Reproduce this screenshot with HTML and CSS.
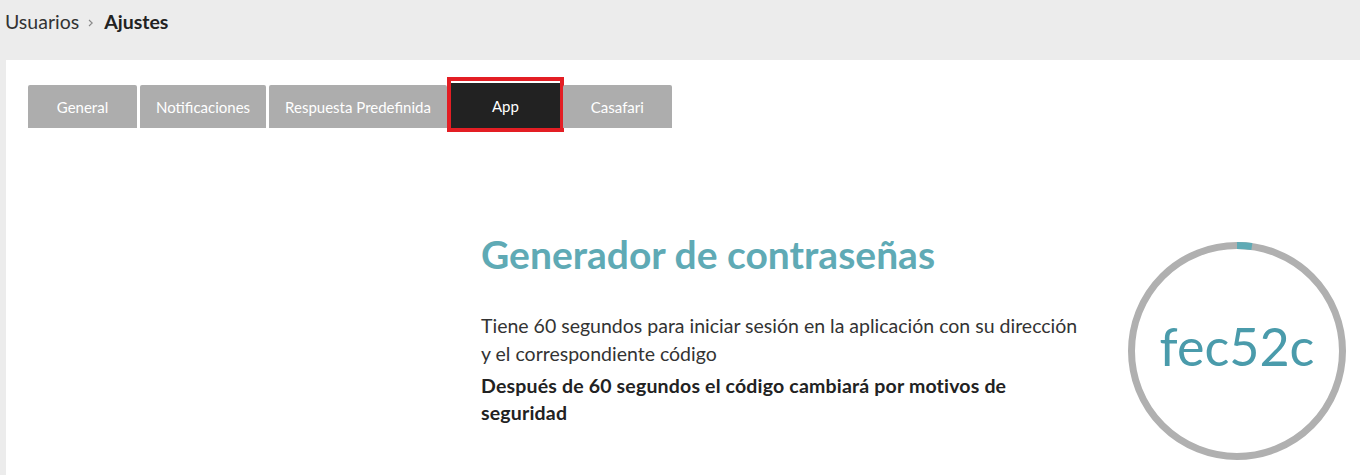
FILE: index.html
```html
<!DOCTYPE html>
<html lang="es">
<head>
    <meta charset="UTF-8">
    <meta name="viewport" content="width=device-width, initial-scale=1.0">
    <title>Ajustes</title>
    <link rel="stylesheet" href="styles.css">
</head>
<body>

    <div class="topbar">
        <span class="crumb">Usuarios</span>
        <svg class="crumb-sep" width="6" height="8" viewBox="0 0 6 8"><path d="M1 1l3.2 3L1 7" fill="none" stroke="#888" stroke-width="1.1"/></svg>
        <span class="crumb current">Ajustes</span>
    </div>

    <div class="panel">
        <div class="tabs">
            <a class="tab">General</a>
            <a class="tab">Notificaciones</a>
            <a class="tab">Respuesta Predefinida</a>
            <a class="tab active">App</a>
            <a class="tab">Casafari</a>
        </div>

        <div class="app-section">
            <div></div>
            <div class="info">
                <h1>Generador de contraseñas</h1>
                <p>Tiene 60 segundos para iniciar sesión en la aplicación con su dirección y el correspondiente código</p>
                <p class="warning">Después de 60 segundos el código cambiará por motivos de seguridad</p>
            </div>
            <div class="timer">
                <svg class="ring" width="218" height="218" viewBox="0 0 218 218">
                    <circle cx="109" cy="109" r="105.5" fill="none" stroke="#b0b0b0" stroke-width="7"/>
                    <circle id="progress" cx="109" cy="109" r="105.5" fill="none" stroke="#5faab5" stroke-width="7"
                        stroke-dasharray="15 700" transform="rotate(-90 109 109)"/>
                </svg>
                <span class="code">fec52c</span>
            </div>
        </div>
    </div>

</body>
</html>
```

FILE: styles.css
```css
body { margin: 0; font-family: Lato, "Open Sans", sans-serif; background: #ececec; color: #333; }
.topbar { height: 60px; padding-left: 5px; display: flex; align-items: center; padding-bottom: 17px; box-sizing: border-box; }
.crumb { font-size: 19.5px; color: #333; }
.crumb.current { font-weight: bold; color: #222; }
.crumb-sep { margin: 3px 10px 0 9px; }
.panel { background: #fff; margin-left: 6px; padding: 25px 22px 0; height: 415px; box-sizing: border-box; }
.tabs { display: flex; gap: 3px; }
.tab { min-width: 109px; height: 43px; box-sizing: border-box; padding: 0 16px; display: flex; align-items: center; justify-content: center; background: #adadad; color: #fff; font-size: 15px; border-radius: 2px 2px 0 0; cursor: pointer; }
.tab.active { background: #222; outline: 4px solid #e31e24; margin: -4px 0 0 1px; height: 47px; border-top: 2px solid #fff; border-radius: 0; }
.app-section { display: grid; grid-template-columns: 453px 647px 218px; margin-top: 103px; }
.info h1 { margin: 0 0 34px; font-size: 39px; font-weight: bold; color: #5faab5; line-height: 1.2; }
.info p { margin: 0; font-size: 19.5px; line-height: 28px; width: 600px; }
.info .warning { font-weight: bold; color: #222; margin-top: 4px; line-height: 27px; letter-spacing: 0.18px; }
.timer { position: relative; width: 218px; height: 218px; margin-top: 11px; display: flex; align-items: center; justify-content: center; }
.ring { position: absolute; left: 0; top: 0; }
.code { position: relative; font-size: 52px; color: #4a9bab; padding-bottom: 10px; }
```
